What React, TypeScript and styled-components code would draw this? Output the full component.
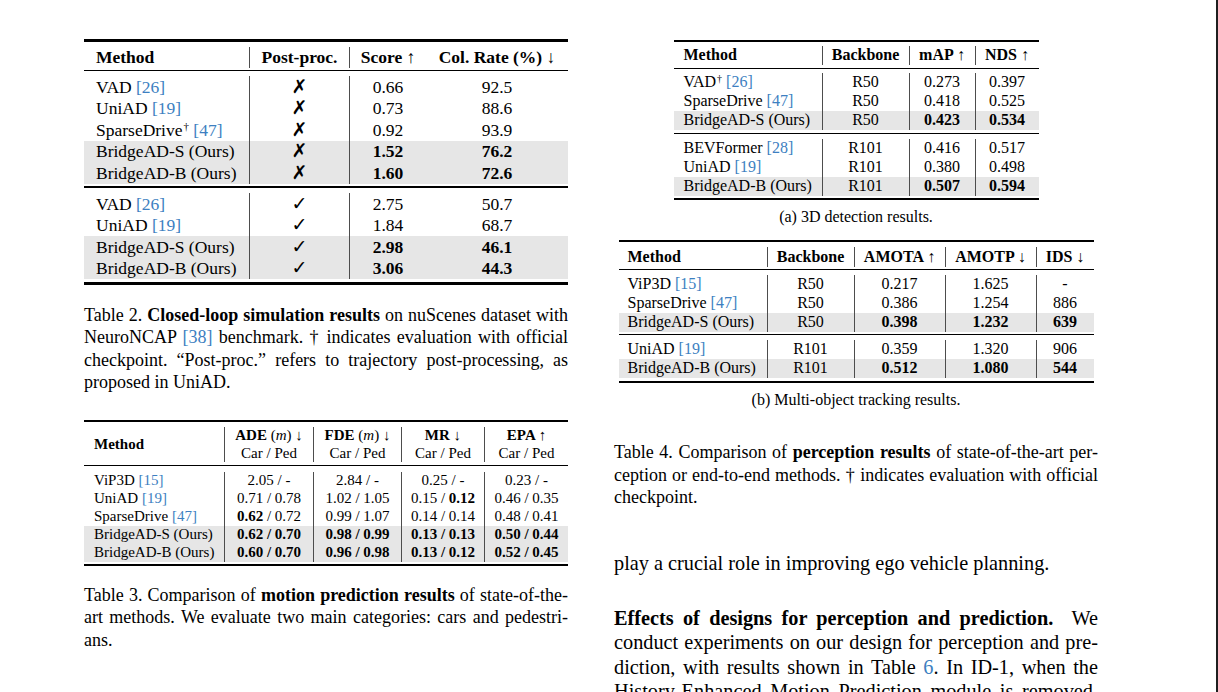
import React from 'react';
import styled, { createGlobalStyle } from 'styled-components';

const GlobalStyle = createGlobalStyle`
  html, body {
    margin: 0;
    padding: 0;
    background: #fff;
  }
  body {
    font-family: "Liberation Serif", "Times New Roman", serif;
    color: #000;
  }
  * {
    box-sizing: border-box;
  }
`;

type Node = React.ReactNode;

interface RowSpec {
  cells: Node[];
  shade?: boolean;
}

interface TableProps {
  width: number;
  cols: number[];
  seps: number[];
  pad: number;
  size: number;
  rule: number;
  gaps: [number, number];
  headH: number;
  rowH: number;
  mid: [number, number, number];
  split?: [number, number, number];
  head: Node[];
  groups: RowSpec[][];
}

const ResultTable = (t: TableProps) => {
  const tpl = t.cols.map((c) => `${c}px`).join(' ');

  const renderRow = (cells: Node[], h: number, shade: boolean, key: string, head = false) => (
    <Row key={key} $cols={tpl} $h={h} $shade={shade}>
      {cells.map((c, i) => (
        <Cell key={i} $sep={t.seps.includes(i)} $left={i === 0} $pad={t.pad} $head={head}>
          <span>{c}</span>
        </Cell>
      ))}
    </Row>
  );

  return (
    <TableBox $w={t.width} $rule={t.rule} $size={t.size} $gapTop={t.gaps[0]} $gapBottom={t.gaps[1]}>
      {renderRow(t.head, t.headH, false, 'head', true)}
      <Rule $t={t.mid[1]} $above={t.mid[0]} $below={t.mid[2]} />
      {t.groups.map((g, gi) => (
        <React.Fragment key={gi}>
          {gi > 0 && t.split && <Rule $t={t.split[1]} $above={t.split[0]} $below={t.split[2]} />}
          {g.map((r, ri) => renderRow(r.cells, t.rowH, !!r.shade, `${gi}-${ri}`))}
        </React.Fragment>
      ))}
    </TableBox>
  );
};

const X = () => <Mark>✗</Mark>;
const V = () => <Mark>✓</Mark>;

const App = () => {
  return (
    <>
      <GlobalStyle />
      <Page>
        <Column $top={39}>
          <ResultTable
            width={484}
            cols={[165, 100, 77, 142]}
            seps={[1, 2]}
            pad={12}
            size={17.5}
            rule={3}
            gaps={[5, 3]}
            headH={21}
            rowH={21.5}
            mid={[2, 1, 5]}
            split={[2.5, 1.5, 5.5]}
            head={[
              'Method',
              'Post-proc.',
              <>Score <Arrow>↑</Arrow></>,
              <>Col. Rate (%) <Arrow>↓</Arrow></>,
            ]}
            groups={[
              [
                { cells: [<>VAD <Cite>[26]</Cite></>, <X />, '0.66', '92.5'] },
                { cells: [<>UniAD <Cite>[19]</Cite></>, <X />, '0.73', '88.6'] },
                { cells: [<>SparseDrive<Dag>†</Dag> <Cite>[47]</Cite></>, <X />, '0.92', '93.9'] },
                { cells: ['BridgeAD-S (Ours)', <X />, <b>1.52</b>, <b>76.2</b>], shade: true },
                { cells: ['BridgeAD-B (Ours)', <X />, <b>1.60</b>, <b>72.6</b>], shade: true },
              ],
              [
                { cells: [<>VAD <Cite>[26]</Cite></>, <V />, '2.75', '50.7'] },
                { cells: [<>UniAD <Cite>[19]</Cite></>, <V />, '1.84', '68.7'] },
                { cells: ['BridgeAD-S (Ours)', <V />, <b>2.98</b>, <b>46.1</b>], shade: true },
                { cells: ['BridgeAD-B (Ours)', <V />, <b>3.06</b>, <b>44.3</b>], shade: true },
              ],
            ]}
          />

          <Caption $mt={18.75}>
            <JLine>Table 2. <b>Closed-loop simulation results</b> on nuScenes dataset with</JLine>
            <JLine>NeuroNCAP <Cite>[38]</Cite> benchmark. † indicates evaluation with official</JLine>
            <JLine>checkpoint. “Post-proc.” refers to trajectory post-processing, as</JLine>
            <JLine $last>proposed in UniAD.</JLine>
          </Caption>

          <Spacer $h={26.25} />

          <ResultTable
            width={484}
            cols={[140, 89, 88, 83, 84]}
            seps={[1, 2, 3, 4]}
            pad={10}
            size={15}
            rule={2}
            gaps={[5, 2]}
            headH={35}
            rowH={18}
            mid={[3, 1, 6]}
            head={[
              'Method',
              <Stack><span>ADE <Plain>(<i>m</i>)</Plain> <Arrow>↓</Arrow></span><Plain>Car / Ped</Plain></Stack>,
              <Stack><span>FDE <Plain>(<i>m</i>)</Plain> <Arrow>↓</Arrow></span><Plain>Car / Ped</Plain></Stack>,
              <Stack><span>MR <Arrow>↓</Arrow></span><Plain>Car / Ped</Plain></Stack>,
              <Stack><span>EPA <Arrow>↑</Arrow></span><Plain>Car / Ped</Plain></Stack>,
            ]}
            groups={[
              [
                { cells: [<>ViP3D <Cite>[15]</Cite></>, '2.05 / -', '2.84 / -', '0.25 / -', '0.23 / -'] },
                { cells: [<>UniAD <Cite>[19]</Cite></>, '0.71 / 0.78', '1.02 / 1.05', <>0.15 / <b>0.12</b></>, '0.46 / 0.35'] },
                { cells: [<>SparseDrive <Cite>[47]</Cite></>, <><b>0.62</b> / 0.72</>, '0.99 / 1.07', '0.14 / 0.14', '0.48 / 0.41'] },
                {
                  cells: ['BridgeAD-S (Ours)', <b>0.62 / 0.70</b>, <b>0.98 / 0.99</b>, <b>0.13 / 0.13</b>, <b>0.50 / 0.44</b>],
                  shade: true,
                },
                {
                  cells: ['BridgeAD-B (Ours)', <b>0.60 / 0.70</b>, <b>0.96 / 0.98</b>, <b>0.13 / 0.12</b>, <b>0.52 / 0.45</b>],
                  shade: true,
                },
              ],
            ]}
          />

          <Caption $mt={17.75}>
            <JLine>Table 3. Comparison of <b>motion prediction results</b> of state-of-the-</JLine>
            <JLine>art methods. We evaluate two main categories: cars and pedestri-</JLine>
            <JLine $last>ans.</JLine>
          </Caption>
        </Column>

        <Column $top={40}>
          <ResultTable
            width={365}
            cols={[148, 87, 66, 64]}
            seps={[1, 2, 3]}
            pad={10}
            size={16}
            rule={2}
            gaps={[4, 2]}
            headH={19}
            rowH={19}
            mid={[3, 1, 4]}
            split={[3, 1, 5]}
            head={['Method', 'Backbone', <>mAP <Arrow>↑</Arrow></>, <>NDS <Arrow>↑</Arrow></>]}
            groups={[
              [
                { cells: [<>VAD<Dag>†</Dag> <Cite>[26]</Cite></>, 'R50', '0.273', '0.397'] },
                { cells: [<>SparseDrive <Cite>[47]</Cite></>, 'R50', '0.418', '0.525'] },
                { cells: ['BridgeAD-S (Ours)', 'R50', <b>0.423</b>, <b>0.534</b>], shade: true },
              ],
              [
                { cells: [<>BEVFormer <Cite>[28]</Cite></>, 'R101', '0.416', '0.517'] },
                { cells: [<>UniAD <Cite>[19]</Cite></>, 'R101', '0.380', '0.498'] },
                { cells: ['BridgeAD-B (Ours)', 'R101', <b>0.507</b>, <b>0.594</b>], shade: true },
              ],
            ]}
          />
          <SubCaption $mt={6.7}>(a) 3D detection results.</SubCaption>

          <Spacer $h={13.3} />

          <ResultTable
            width={475}
            cols={[148, 87, 91, 91, 58]}
            seps={[1, 2, 3, 4]}
            pad={9}
            size={16}
            rule={2}
            gaps={[5, 3.5]}
            headH={20}
            rowH={19}
            mid={[2, 1, 5]}
            split={[2, 1.5, 4.5]}
            head={[
              'Method',
              'Backbone',
              <>AMOTA <Arrow>↑</Arrow></>,
              <>AMOTP <Arrow>↓</Arrow></>,
              <>IDS <Arrow>↓</Arrow></>,
            ]}
            groups={[
              [
                { cells: [<>ViP3D <Cite>[15]</Cite></>, 'R50', '0.217', '1.625', '-'] },
                { cells: [<>SparseDrive <Cite>[47]</Cite></>, 'R50', '0.386', '1.254', '886'] },
                { cells: ['BridgeAD-S (Ours)', 'R50', <b>0.398</b>, <b>1.232</b>, <b>639</b>], shade: true },
              ],
              [
                { cells: [<>UniAD <Cite>[19]</Cite></>, 'R101', '0.359', '1.320', '906'] },
                { cells: ['BridgeAD-B (Ours)', 'R101', <b>0.512</b>, <b>1.080</b>, <b>544</b>], shade: true },
              ],
            ]}
          />
          <SubCaption $mt={6.5}>(b) Multi-object tracking results.</SubCaption>

          <Caption $mt={31.5}>
            <JLine>Table 4. Comparison of <b>perception results</b> of state-of-the-art per-</JLine>
            <JLine>ception or end-to-end methods. † indicates evaluation with official</JLine>
            <JLine $last>checkpoint.</JLine>
          </Caption>

          <Body $mt={42.2}>
            <JLine $last>play a crucial role in improving ego vehicle planning.</JLine>
          </Body>

          <Body $mt={30.7}>
            <JLine><b>Effects of designs for perception and prediction.</b>&nbsp; We</JLine>
            <JLine>conduct experiments on our design for perception and pre-</JLine>
            <JLine>diction, with results shown in Table <Cite>6</Cite>. In ID-1, when the</JLine>
            <JLine>History-Enhanced Motion Prediction module is removed,</JLine>
          </Body>
        </Column>
      </Page>
    </>
  );
};

const Page = styled.div`
  width: 1218px;
  height: 692px;
  overflow: hidden;
  border-right: 2px solid #1f1f1f;
  display: flex;
  align-items: flex-start;
  gap: 46px;
  padding-left: 84px;
`;

const Column = styled.div<{ $top: number }>`
  width: 484px;
  display: flex;
  flex-direction: column;
  padding-top: ${(p) => p.$top}px;
`;

const Spacer = styled.div<{ $h: number }>`
  height: ${(p) => p.$h}px;
  flex: none;
`;

const TableBox = styled.div<{ $w: number; $rule: number; $size: number; $gapTop: number; $gapBottom: number }>`
  width: ${(p) => p.$w}px;
  align-self: center;
  border-top: ${(p) => p.$rule}px solid #000;
  border-bottom: ${(p) => p.$rule}px solid #000;
  padding: ${(p) => p.$gapTop}px 0 ${(p) => p.$gapBottom}px;
  font-size: ${(p) => p.$size}px;
  line-height: 1.15;
`;

const Row = styled.div<{ $cols: string; $h: number; $shade: boolean }>`
  display: grid;
  grid-template-columns: ${(p) => p.$cols};
  height: ${(p) => p.$h}px;
  background: ${(p) => (p.$shade ? '#e6e6e6' : 'transparent')};
`;

const Cell = styled.div<{ $sep: boolean; $left: boolean; $pad: number; $head: boolean }>`
  display: flex;
  align-items: center;
  justify-content: ${(p) => (p.$left ? 'flex-start' : 'center')};
  padding-left: ${(p) => (p.$left ? p.$pad : 0)}px;
  border-left: ${(p) => (p.$sep ? '1px solid #4d4d4d' : 'none')};
  font-weight: ${(p) => (p.$head ? 700 : 400)};
  white-space: nowrap;
`;

const Rule = styled.div<{ $t: number; $above: number; $below: number }>`
  height: ${(p) => p.$t}px;
  background: #000;
  margin: ${(p) => p.$above}px 0 ${(p) => p.$below}px;
`;

const Stack = styled.span`
  display: flex;
  flex-direction: column;
  align-items: center;
  line-height: 17.5px;
`;

const Plain = styled.span`
  font-weight: 400;
`;

const Arrow = styled.span`
  font-weight: 400;
`;

const Mark = styled.span`
  font-family: "DejaVu Sans", sans-serif;
  font-size: 19px;
  font-weight: 700;
  line-height: 1;
`;

const Cite = styled.span`
  color: #3d7fc1;
`;

const Dag = styled.sup`
  font-size: 0.62em;
  line-height: 0;
  vertical-align: 0.55em;
  margin-left: 1px;
`;

const Caption = styled.div<{ $mt: number }>`
  margin-top: ${(p) => p.$mt}px;
  font-size: 18px;
  line-height: 22.5px;
`;

const SubCaption = styled.div<{ $mt: number }>`
  margin-top: ${(p) => p.$mt}px;
  font-size: 16px;
  line-height: 20px;
  text-align: center;
`;

const Body = styled.div<{ $mt: number }>`
  margin-top: ${(p) => p.$mt}px;
  font-size: 20.3px;
  line-height: 24.3px;
`;

const JLine = styled.div<{ $last?: boolean }>`
  text-align: ${(p) => (p.$last ? 'left' : 'justify')};
  text-align-last: ${(p) => (p.$last ? 'left' : 'justify')};
`;

export default App;
